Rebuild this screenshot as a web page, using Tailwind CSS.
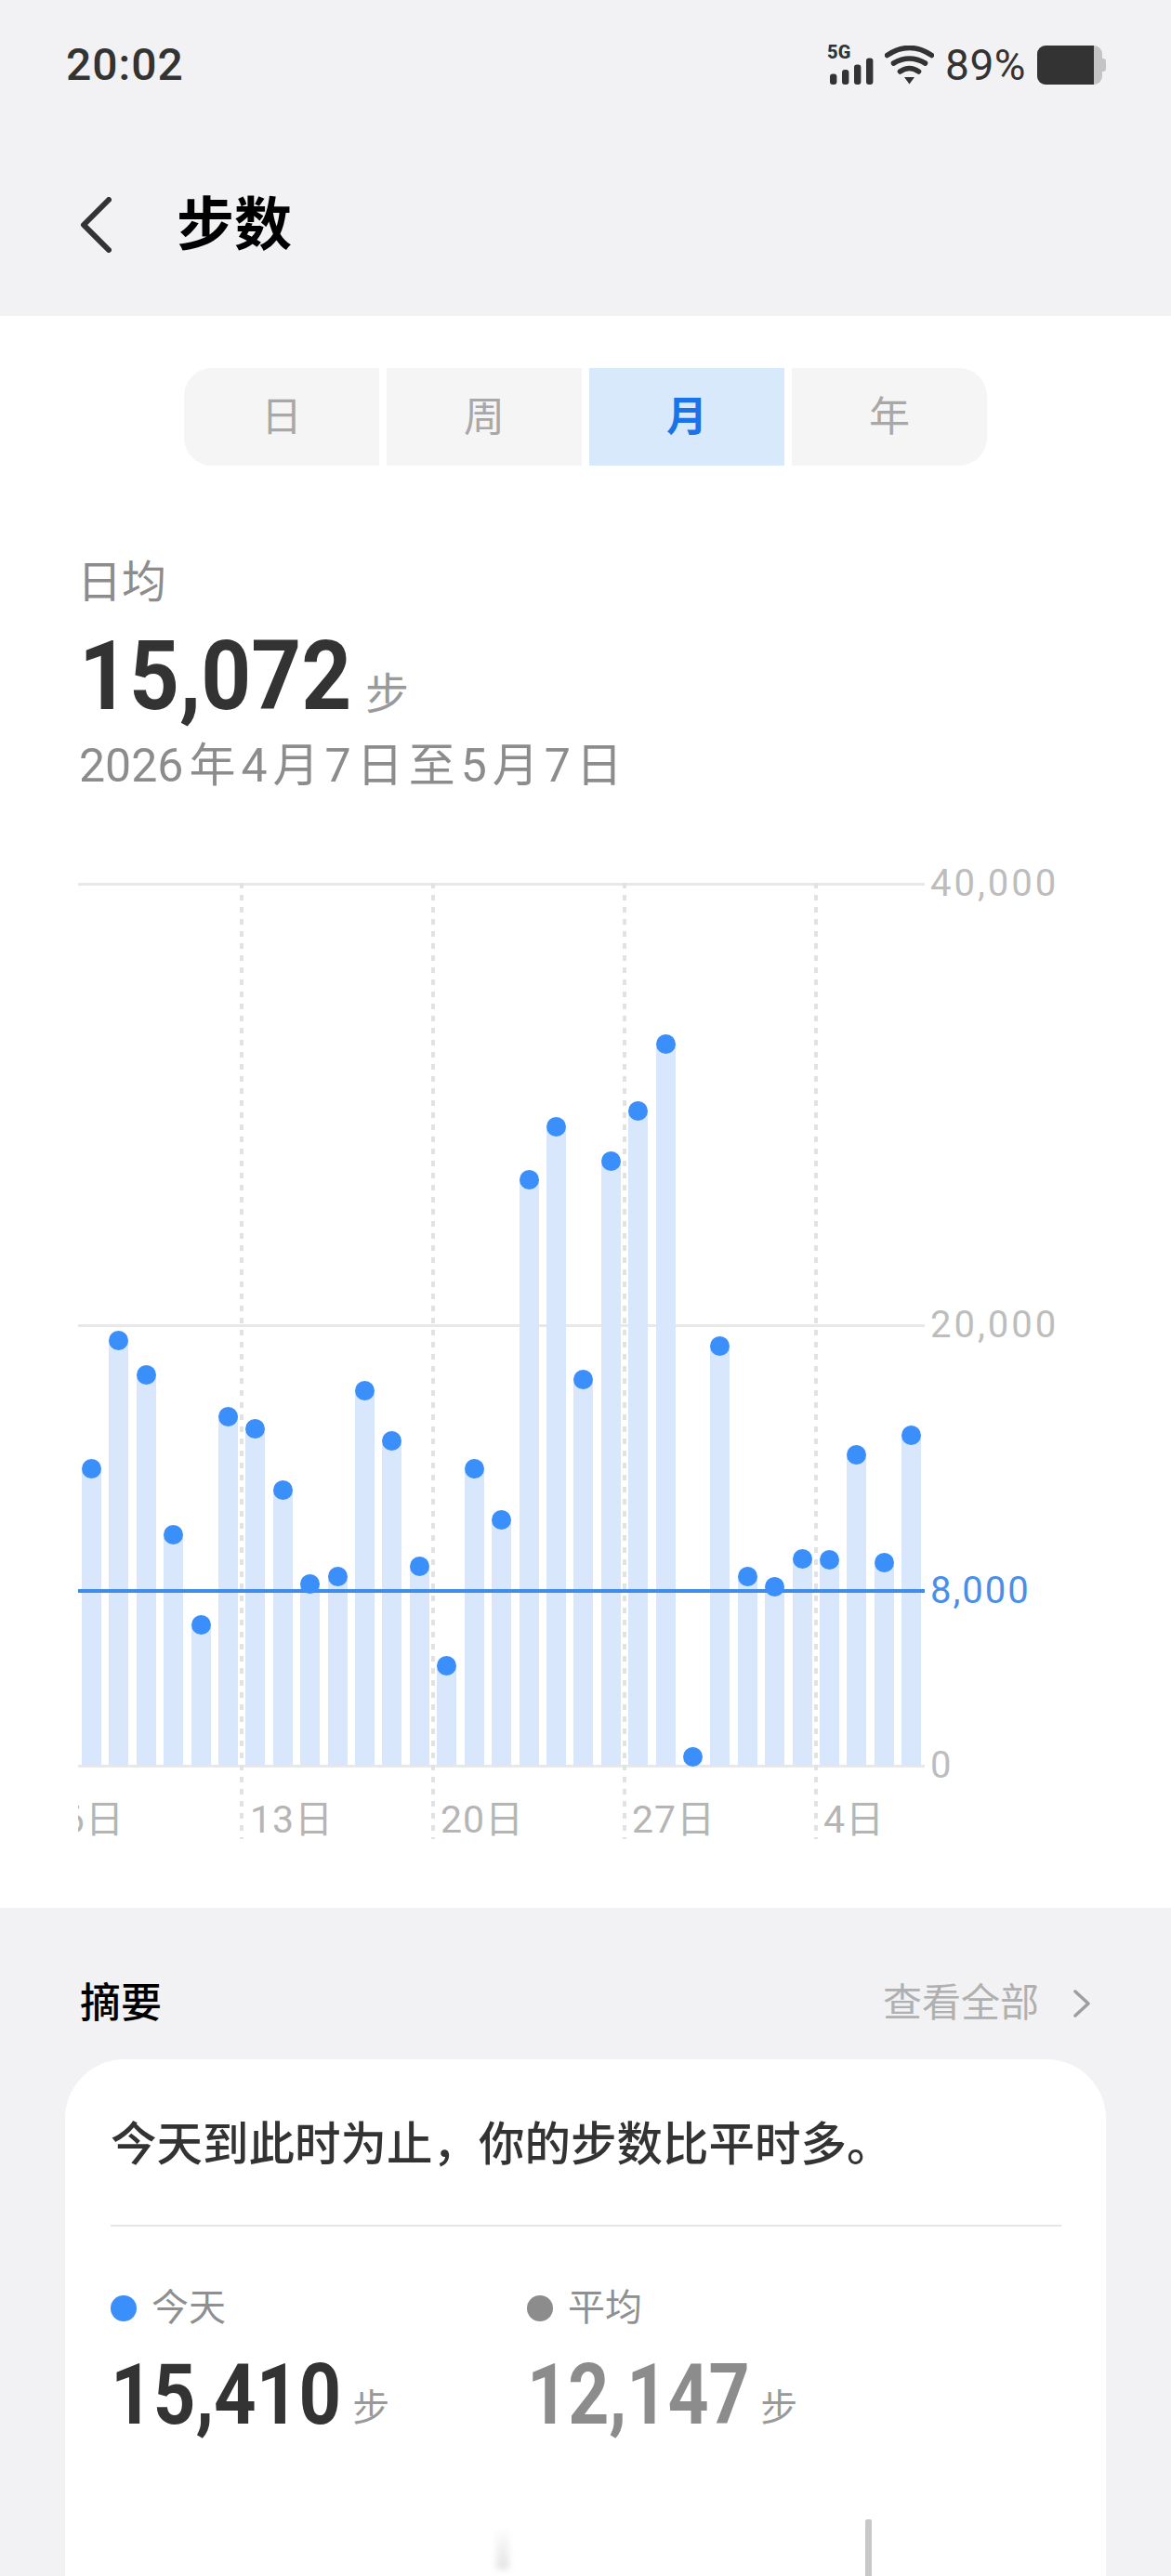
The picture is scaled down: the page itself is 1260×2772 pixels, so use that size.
<!DOCTYPE html>
<html lang="zh">

<head>
	<title>步数</title>
	<meta http-equiv="Content-Type" content="text/html; charset=UTF-8" />
	<script src="https://cdn.jsdelivr.net/npm/@tailwindcss/browser@4"></script>
</head>

<body class="bg-[#f2f2f4]">
	<div class="h-[2772px] w-[1260px] overflow-hidden font-['Roboto','Noto_Sans_CJK_SC',sans-serif]">

		<!-- Status bar -->
		<div class="flex h-[140px] items-start justify-between pl-[71px] pr-[70px] pt-[42px] text-[#333]">
			<p class="text-[48px] leading-[56px] font-medium tracking-[1px]">20:02</p>
			<div class="flex items-start pt-[7px]">
				<div class="relative mt-[13px] ml-[3px] h-[29px] w-[47px]">
					<span class="absolute -top-[15px] -left-[3px] text-[20px] leading-[18px] font-extrabold">5G</span>
					<svg width="47" height="29" viewBox="0 0 47 29" fill="#333">
						<rect x="0" y="17.5" width="7.4" height="11.5" rx="3" />
						<rect x="13" y="13" width="7.4" height="16" rx="3" />
						<rect x="26" y="7.5" width="7.4" height="21.5" rx="3" />
						<rect x="39" y="0.5" width="7.4" height="28.5" rx="3" />
					</svg>
				</div>
				<svg class="ml-[12px]" width="53" height="42" viewBox="0 0 53 42" fill="none" stroke="#333"
					stroke-width="5.6" stroke-linecap="round">
					<path d="M2.5 10.5Q26.5 -5.5 50.5 10.5" />
					<path d="M9.5 19Q26.5 9 43.5 19" />
					<path d="M16.5 28Q26.5 21 36.5 28" />
					<path d="M21 34H32L26.5 41.5Z" fill="#333" stroke="none" />
				</svg>
				<p class="ml-[12px] -mt-[2px] text-[46px] leading-[46px] tracking-[.5px]">89%</p>
				<div class="ml-[12px] flex h-[42px] items-center">
					<div class="flex h-[42px] w-[70px] overflow-hidden rounded-[9px] bg-[#c4c4c4]">
						<div class="w-[61px] bg-[#333]"></div>
					</div>
					<div class="h-[14px] w-[4px] rounded-r-[3px] bg-[#c4c4c4]"></div>
				</div>
			</div>
		</div>

		<!-- Header -->
		<div class="flex h-[200px] items-start pl-[86px] pt-[72px]">
			<svg width="34" height="60" viewBox="0 0 34 60" fill="none" stroke="#333" stroke-width="6"
				stroke-linecap="round" stroke-linejoin="round">
				<path d="M31 3L4 30L31 57" />
			</svg>
			<h1 class="ml-[70px] -mt-[3px] text-[62px] leading-[68px] font-bold text-black">步数</h1>
		</div>

		<!-- Main panel -->
		<div class="h-[1713px] bg-white pt-[56px]">
			<div class="ml-[198px] flex w-[864px] gap-[8px] text-[44px] text-[#a8a8a8]">
				<button class="h-[105px] w-[210px] rounded-l-[30px] bg-[#f5f5f5]">日</button>
				<button class="h-[105px] w-[210px] bg-[#f5f5f5]">周</button>
				<button class="h-[105px] w-[210px] bg-[#d9e9fc] font-bold text-[#1a73e8]">月</button>
				<button class="h-[105px] w-[210px] rounded-r-[30px] bg-[#f5f5f5]">年</button>
			</div>

			<div class="ml-[85px] mt-[96px]">
				<p class="-ml-[2px] text-[48px] leading-[60px] text-[#8c8c8c]">日均</p>
				<div class="mt-[13px] flex items-baseline">
					<p class="origin-left scale-x-[.905] text-[104px] leading-[116px] font-bold text-[#333]">15,072</p>
					<p class="-ml-[16px] text-[47px] text-[#999]">步</p>
				</div>
				<p class="mt-[8px] text-[50px] leading-[60px] text-[#8c8c8c]">2026<span class="mx-[6px]">年</span>4<span class="mx-[6px]">月</span>7<span class="mx-[6px]">日</span>至<span class="ml-[6px]">5</span><span class="mx-[6px]">月</span>7<span class="ml-[6px]">日</span></p>
			</div>

			<!-- Chart -->
			<div class="relative ml-[84px] mt-[96px] h-[1040px] w-[1176px]">
				<!-- grid -->
				<div class="absolute left-0 top-0 h-[3px] w-[911px] bg-[#e8e8e8]"></div>
				<div class="absolute left-0 top-[475px] h-[3px] w-[911px] bg-[#e8e8e8]"></div>
				<div class="absolute left-0 top-[949px] h-[3px] w-[911px] bg-[#e8e8e8]"></div>
				<div class="absolute left-[174px] top-0 h-[1029px] w-[4px] bg-[repeating-linear-gradient(to_bottom,#e2e2e2_0,#e2e2e2_6px,transparent_6px,transparent_13px)]"></div>
				<div class="absolute left-[380px] top-0 h-[1029px] w-[4px] bg-[repeating-linear-gradient(to_bottom,#e2e2e2_0,#e2e2e2_6px,transparent_6px,transparent_13px)]"></div>
				<div class="absolute left-[586px] top-0 h-[1029px] w-[4px] bg-[repeating-linear-gradient(to_bottom,#e2e2e2_0,#e2e2e2_6px,transparent_6px,transparent_13px)]"></div>
				<div class="absolute left-[792px] top-0 h-[1029px] w-[4px] bg-[repeating-linear-gradient(to_bottom,#e2e2e2_0,#e2e2e2_6px,transparent_6px,transparent_13px)]"></div>

				<!-- bars -->
				<div class="absolute left-[4px] top-0 flex h-[950px] items-end gap-[8.42px]">
					<div class="relative w-[21px] bg-[#d8e7fb]" style="height:320px"><span class="absolute left-0 -top-[10px] z-10 size-[21px] rounded-full bg-[#3b8ffa]"></span></div>
					<div class="relative w-[21px] bg-[#d8e7fb]" style="height:458px"><span class="absolute left-0 -top-[10px] z-10 size-[21px] rounded-full bg-[#3b8ffa]"></span></div>
					<div class="relative w-[21px] bg-[#d8e7fb]" style="height:421px"><span class="absolute left-0 -top-[10px] z-10 size-[21px] rounded-full bg-[#3b8ffa]"></span></div>
					<div class="relative w-[21px] bg-[#d8e7fb]" style="height:249px"><span class="absolute left-0 -top-[10px] z-10 size-[21px] rounded-full bg-[#3b8ffa]"></span></div>
					<div class="relative w-[21px] bg-[#d8e7fb]" style="height:152px"><span class="absolute left-0 -top-[10px] z-10 size-[21px] rounded-full bg-[#3b8ffa]"></span></div>
					<div class="relative w-[21px] bg-[#d8e7fb]" style="height:376px"><span class="absolute left-0 -top-[10px] z-10 size-[21px] rounded-full bg-[#3b8ffa]"></span></div>
					<div class="relative w-[21px] bg-[#d8e7fb]" style="height:363px"><span class="absolute left-0 -top-[10px] z-10 size-[21px] rounded-full bg-[#3b8ffa]"></span></div>
					<div class="relative w-[21px] bg-[#d8e7fb]" style="height:297px"><span class="absolute left-0 -top-[10px] z-10 size-[21px] rounded-full bg-[#3b8ffa]"></span></div>
					<div class="relative w-[21px] bg-[#d8e7fb]" style="height:196px"><span class="absolute left-0 -top-[10px] z-10 size-[21px] rounded-full bg-[#3b8ffa]"></span></div>
					<div class="relative w-[21px] bg-[#d8e7fb]" style="height:204px"><span class="absolute left-0 -top-[10px] z-10 size-[21px] rounded-full bg-[#3b8ffa]"></span></div>
					<div class="relative w-[21px] bg-[#d8e7fb]" style="height:404px"><span class="absolute left-0 -top-[10px] z-10 size-[21px] rounded-full bg-[#3b8ffa]"></span></div>
					<div class="relative w-[21px] bg-[#d8e7fb]" style="height:350px"><span class="absolute left-0 -top-[10px] z-10 size-[21px] rounded-full bg-[#3b8ffa]"></span></div>
					<div class="relative w-[21px] bg-[#d8e7fb]" style="height:215px"><span class="absolute left-0 -top-[10px] z-10 size-[21px] rounded-full bg-[#3b8ffa]"></span></div>
					<div class="relative w-[21px] bg-[#d8e7fb]" style="height:108px"><span class="absolute left-0 -top-[10px] z-10 size-[21px] rounded-full bg-[#3b8ffa]"></span></div>
					<div class="relative w-[21px] bg-[#d8e7fb]" style="height:320px"><span class="absolute left-0 -top-[10px] z-10 size-[21px] rounded-full bg-[#3b8ffa]"></span></div>
					<div class="relative w-[21px] bg-[#d8e7fb]" style="height:265px"><span class="absolute left-0 -top-[10px] z-10 size-[21px] rounded-full bg-[#3b8ffa]"></span></div>
					<div class="relative w-[21px] bg-[#d8e7fb]" style="height:631px"><span class="absolute left-0 -top-[10px] z-10 size-[21px] rounded-full bg-[#3b8ffa]"></span></div>
					<div class="relative w-[21px] bg-[#d8e7fb]" style="height:688px"><span class="absolute left-0 -top-[10px] z-10 size-[21px] rounded-full bg-[#3b8ffa]"></span></div>
					<div class="relative w-[21px] bg-[#d8e7fb]" style="height:416px"><span class="absolute left-0 -top-[10px] z-10 size-[21px] rounded-full bg-[#3b8ffa]"></span></div>
					<div class="relative w-[21px] bg-[#d8e7fb]" style="height:651px"><span class="absolute left-0 -top-[10px] z-10 size-[21px] rounded-full bg-[#3b8ffa]"></span></div>
					<div class="relative w-[21px] bg-[#d8e7fb]" style="height:705px"><span class="absolute left-0 -top-[10px] z-10 size-[21px] rounded-full bg-[#3b8ffa]"></span></div>
					<div class="relative w-[21px] bg-[#d8e7fb]" style="height:777px"><span class="absolute left-0 -top-[10px] z-10 size-[21px] rounded-full bg-[#3b8ffa]"></span></div>
					<div class="relative w-[21px]" style="height:10px"><span class="absolute left-0 -top-[10px] z-10 size-[21px] rounded-full bg-[#3b8ffa]"></span></div>
					<div class="relative w-[21px] bg-[#d8e7fb]" style="height:452px"><span class="absolute left-0 -top-[10px] z-10 size-[21px] rounded-full bg-[#3b8ffa]"></span></div>
					<div class="relative w-[21px] bg-[#d8e7fb]" style="height:204px"><span class="absolute left-0 -top-[10px] z-10 size-[21px] rounded-full bg-[#3b8ffa]"></span></div>
					<div class="relative w-[21px] bg-[#d8e7fb]" style="height:193px"><span class="absolute left-0 -top-[10px] z-10 size-[21px] rounded-full bg-[#3b8ffa]"></span></div>
					<div class="relative w-[21px] bg-[#d8e7fb]" style="height:223px"><span class="absolute left-0 -top-[10px] z-10 size-[21px] rounded-full bg-[#3b8ffa]"></span></div>
					<div class="relative w-[21px] bg-[#d8e7fb]" style="height:222px"><span class="absolute left-0 -top-[10px] z-10 size-[21px] rounded-full bg-[#3b8ffa]"></span></div>
					<div class="relative w-[21px] bg-[#d8e7fb]" style="height:335px"><span class="absolute left-0 -top-[10px] z-10 size-[21px] rounded-full bg-[#3b8ffa]"></span></div>
					<div class="relative w-[21px] bg-[#d8e7fb]" style="height:219px"><span class="absolute left-0 -top-[10px] z-10 size-[21px] rounded-full bg-[#3b8ffa]"></span></div>
					<div class="relative w-[21px] bg-[#d8e7fb]" style="height:356px"><span class="absolute left-0 -top-[10px] z-10 size-[21px] rounded-full bg-[#3b8ffa]"></span></div>
				</div>

				<!-- goal line -->
				<div class="absolute left-0 top-[760px] z-[5] h-[3.5px] w-[911px] bg-[#3f8ced]"></div>

				<!-- y axis -->
				<p class="absolute left-[917px] -top-[23px] text-[40px] leading-[48px] tracking-[3px] text-[#bdbdbd]">40,000</p>
				<p class="absolute left-[917px] top-[452px] text-[40px] leading-[48px] tracking-[3px] text-[#bdbdbd]">20,000</p>
				<p class="absolute left-[917px] top-[738px] text-[40px] leading-[48px] tracking-[2px] text-[#4a8fe7]">8,000</p>
				<p class="absolute left-[917px] top-[926px] text-[40px] leading-[48px] text-[#bdbdbd]">0</p>

				<!-- x axis -->
				<div class="absolute left-0 top-[984px] h-[48px] w-[911px] overflow-hidden text-[41px] leading-[48px] tracking-[1px] text-[#b5b5b5]">
					<span class="absolute -left-[16px] top-0">6日</span>
					<span class="absolute left-[185px] top-0">13日</span>
					<span class="absolute left-[390px] top-0">20日</span>
					<span class="absolute left-[596px] top-0">27日</span>
					<span class="absolute left-[802px] top-0">4日</span>
				</div>
			</div>
		</div>

		<!-- Summary -->
		<div class="flex h-[163px] items-start justify-between pl-[86px] pr-[86px] pt-[78px]">
			<h2 class="text-[44px] leading-[50px] font-medium text-black">摘要</h2>
			<div class="flex items-center text-[42px] leading-[50px] text-[#b0b0b0]">
				<span>查看全部</span>
				<svg class="ml-[36px]" width="20" height="30" viewBox="0 0 20 30" fill="none" stroke="#9e9e9e"
					stroke-width="3.5" stroke-linecap="round" stroke-linejoin="round">
					<path d="M3 2L17 15L3 28" />
				</svg>
			</div>
		</div>

		<div class="mx-[70px] h-[600px] rounded-t-[64px] bg-white px-[49px] pt-[64px]">
			<p class="text-[49.5px] leading-[56px] font-medium text-[#333]">今天到此时为止，你的步数比平时多。</p>
			<div class="mt-[58px] h-[2px] w-[1023px] bg-[#e6e6e6]"></div>

			<div class="mt-[64px] flex">
				<div class="w-[448px]">
					<div class="flex items-center text-[40px] leading-[48px] text-[#8f8f8f]">
						<span class="size-[28px] rounded-full bg-[#3b8ffa]"></span>
						<span class="ml-[16px]">今天</span>
					</div>
					<div class="mt-[20px] flex items-baseline">
						<p class="origin-left scale-x-[.885] text-[90px] leading-[100px] font-bold text-[#333]">15,410</p>
						<p class="-ml-[20px] -translate-y-[3px] text-[40px] text-[#999]">步</p>
					</div>
				</div>
				<div>
					<div class="flex items-center text-[40px] leading-[48px] text-[#8f8f8f]">
						<span class="size-[28px] rounded-full bg-[#8c8c8c]"></span>
						<span class="ml-[16px]">平均</span>
					</div>
					<div class="mt-[20px] flex items-baseline">
						<p class="origin-left scale-x-[.855] text-[90px] leading-[100px] font-bold text-[#8c8c8c]">12,147</p>
						<p class="-ml-[29px] -translate-y-[3px] text-[40px] text-[#999]">步</p>
					</div>
				</div>
			</div>

			<!-- lower chart, cut off by the window -->
			<div class="mt-[83px] flex items-start">
				<div class="ml-[415px] mt-[8px] h-[46px] w-[14px] bg-gradient-to-b from-white to-[#e4e4e4] blur-[3px]"></div>
				<div class="ml-[383px] h-[70px] w-[7px] rounded-t-[2px] bg-[#c8c8c8]"></div>
			</div>
		</div>
	</div>
</body>

</html>
